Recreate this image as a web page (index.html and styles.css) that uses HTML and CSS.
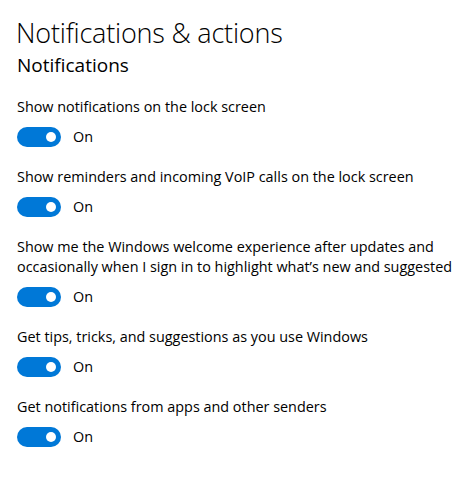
FILE: index.html
```html
<!DOCTYPE html>
<html>
<head>
<meta charset="utf-8">
<link rel="stylesheet" href="styles.css">
</head>
<body>
<div class="page">
  <h1 class="title">Notifications &amp; actions</h1>
  <h2 class="subtitle">Notifications</h2>
  <div class="settings">
    <div class="setting">
      <div class="label">Show notifications on the lock screen</div>
      <div class="switch-row"><span class="switch"><span class="knob"></span></span><span class="state">On</span></div>
    </div>
    <div class="setting">
      <div class="label">Show reminders and incoming VoIP calls on the lock screen</div>
      <div class="switch-row"><span class="switch"><span class="knob"></span></span><span class="state">On</span></div>
    </div>
    <div class="setting">
      <div class="label">Show me the Windows welcome experience after updates and<br>occasionally when I sign in to highlight what’s new and suggested</div>
      <div class="switch-row"><span class="switch"><span class="knob"></span></span><span class="state">On</span></div>
    </div>
    <div class="setting">
      <div class="label">Get tips, tricks, and suggestions as you use Windows</div>
      <div class="switch-row"><span class="switch"><span class="knob"></span></span><span class="state">On</span></div>
    </div>
    <div class="setting">
      <div class="label">Get notifications from apps and other senders</div>
      <div class="switch-row"><span class="switch"><span class="knob"></span></span><span class="state">On</span></div>
    </div>
  </div>
</div>
</body>
</html>
```
FILE: styles.css
```css
html, body {
  margin: 0;
  padding: 0;
  background: #ffffff;
}
body {
  font-family: "Open Sans", "Noto Sans", sans-serif;
  color: #000000;
}
.page {
  padding: 15px 0 0 17px;
  display: flex;
  flex-direction: column;
}
.title {
  margin: 0 0 0 -1px;
  font-size: 27px;
  font-weight: 300;
  line-height: 36px;
  letter-spacing: -0.2px;
}
.subtitle {
  margin: 2px 0 0 0;
  font-size: 19px;
  font-weight: 400;
  line-height: 24px;
}
.settings {
  margin-top: 20px;
  display: flex;
  flex-direction: column;
  gap: 20px;
}
.setting {
  display: flex;
  flex-direction: column;
  gap: 10px;
}
.label {
  font-size: 14.4px;
  line-height: 20px;
}
.switch-row {
  display: flex;
  align-items: center;
  gap: 12px;
  height: 20px;
}
.switch {
  width: 44px;
  height: 20px;
  border-radius: 10px;
  background: #0078d7;
  display: flex;
  align-items: center;
  justify-content: flex-end;
  padding-right: 5px;
  box-sizing: border-box;
}
.knob {
  width: 10px;
  height: 10px;
  border-radius: 50%;
  background: #ffffff;
}
.state {
  font-size: 14.4px;
  line-height: 20px;
}
```
